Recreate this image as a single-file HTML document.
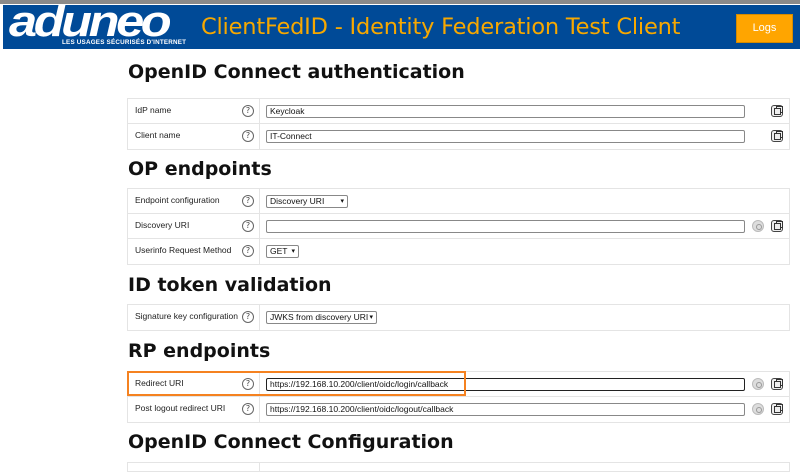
<!DOCTYPE html>
<html><head><meta charset="utf-8"><style>
*{margin:0;padding:0;box-sizing:border-box}
body{width:800px;height:467px;overflow:hidden;background:#fff;font-family:"DejaVu Sans","Liberation Sans",sans-serif;position:relative}
.a{position:absolute}
#top{left:0;top:0;width:800px;height:4px;background:#8a8a8a}
#hdr{left:3px;top:5px;width:797px;height:44px;background:#004a97}
#logo{left:9px;top:0px;color:#fff;font:italic 900 44px "Liberation Sans",sans-serif;letter-spacing:-3px;line-height:44px;transform:scaleX(1.15);transform-origin:left top}
#tag{left:62px;top:39px;color:#fff;font:bold 6.3px "Liberation Sans",sans-serif;letter-spacing:.2px}
#title{left:201px;top:12px;color:#f7a800;font:22.5px "DejaVu Sans",sans-serif;line-height:30px;letter-spacing:-0.2px}
#logs{left:736px;top:14px;width:57px;height:29px;background:#ffa500;border:1px solid #d48a00;color:#fff;font:11px "Liberation Sans",sans-serif;text-align:center;line-height:27px}
h2{position:absolute;left:128px;font:bold 19px "DejaVu Sans",sans-serif;color:#111;letter-spacing:0}
.tb{position:absolute;left:127px;width:663px;border:1px solid #e4e4e4;background:#fff}
.row{position:relative;height:25px;border-bottom:1px solid #e4e4e4}
.row:last-child{border-bottom:none}
.row .l{position:absolute;left:7px;top:6px;font:8.5px "Liberation Sans",sans-serif;color:#222}
.row .d{position:absolute;left:131px;top:0;bottom:0;border-left:1px solid #e4e4e4}
.q{position:absolute;left:114px;top:6px;width:12px;height:12px;border:1px solid #666;border-radius:50%;font-size:8px;line-height:10px;text-align:center;color:#444}
.in{position:absolute;left:138px;top:6px;width:479px;height:13px;border:1px solid #888;border-radius:2px;font:8.5px "Liberation Sans",sans-serif;line-height:11px;padding-left:3px;color:#111}
.sel{position:absolute;left:138px;top:6px;height:13px;border:1px solid #888;border-radius:2px;font:8.5px "Liberation Sans",sans-serif;line-height:11px;padding-left:3px;color:#111}
.sel i{position:absolute;right:3px;top:0;font-style:normal;font-size:7px}
.cp{position:absolute;left:643px;top:6px;width:12px;height:12px;border:1.5px solid #444;border-radius:3px;background:#eee}
.cp:after{content:"";position:absolute;left:2px;top:2px;width:5px;height:5px;border:1px solid #333;box-shadow:2px -2px 0 -1px #eee,2px -2px 0 0 #333}
.gc{position:absolute;left:624px;top:6px;width:12px;height:12px;border-radius:50%;background:#ddd;border:1px solid #bbb}
.gc:after{content:"";position:absolute;left:3px;top:3px;width:4px;height:4px;border-radius:50%;border:1px solid #999}
#hl{left:127px;top:371px;width:339px;height:25px;border:2px solid #f58220}
</style></head><body>
<div class="a" id="top"></div>
<div class="a" id="hdr"></div>
<div class="a" id="logo">aduneo</div>
<div class="a" id="tag">LES USAGES SÉCURISÉS D'INTERNET</div>
<div class="a" id="title">ClientFedID - Identity Federation Test Client</div>
<div class="a" id="logs">Logs</div>

<h2 style="top:61px">OpenID Connect authentication</h2>
<div class="tb" style="top:98px">
 <div class="row"><span class="l">IdP name</span><span class="q">?</span><span class="d"></span><div class="in">Keycloak</div><span class="cp"></span></div>
 <div class="row"><span class="l">Client name</span><span class="q">?</span><span class="d"></span><div class="in">IT-Connect</div><span class="cp"></span></div>
</div>

<h2 style="top:158px">OP endpoints</h2>
<div class="tb" style="top:188px">
 <div class="row"><span class="l">Endpoint configuration</span><span class="q">?</span><span class="d"></span><div class="sel" style="width:82px">Discovery URI<i>▾</i></div></div>
 <div class="row"><span class="l">Discovery URI</span><span class="q">?</span><span class="d"></span><div class="in"></div><span class="gc"></span><span class="cp"></span></div>
 <div class="row"><span class="l">Userinfo Request Method</span><span class="q">?</span><span class="d"></span><div class="sel" style="width:33px">GET<i>▾</i></div></div>
</div>

<h2 style="top:274px">ID token validation</h2>
<div class="tb" style="top:304px">
 <div class="row"><span class="l">Signature key configuration</span><span class="q">?</span><span class="d"></span><div class="sel" style="width:111px">JWKS from discovery URI<i>▾</i></div></div>
</div>

<h2 style="top:340px">RP endpoints</h2>
<div class="tb" style="top:371px">
 <div class="row"><span class="l">Redirect URI</span><span class="q">?</span><span class="d"></span><div class="in" style="border:1.5px solid #222">https://192.168.10.200/client/oidc/login/callback</div><span class="gc"></span><span class="cp"></span></div>
 <div class="row"><span class="l">Post logout redirect URI</span><span class="q">?</span><span class="d"></span><div class="in">https://192.168.10.200/client/oidc/logout/callback</div><span class="gc"></span><span class="cp"></span></div>
</div>
<div class="a" id="hl"></div>

<h2 style="top:431px">OpenID Connect Configuration</h2>
<div class="tb" style="top:462px;height:10px"><span class="d" style="position:absolute;left:131px;top:0;bottom:0;border-left:1px solid #e4e4e4"></span></div>
</body></html>
